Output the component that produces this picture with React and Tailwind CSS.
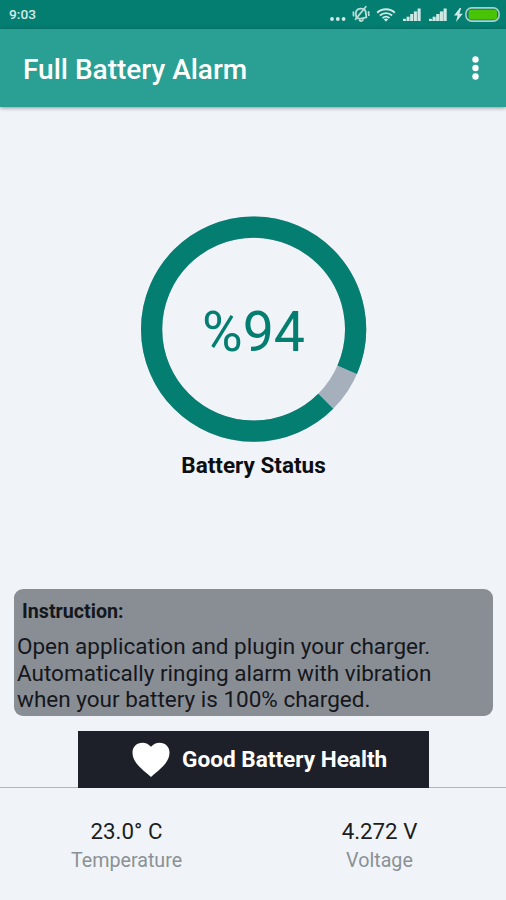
import React from 'react';

const LEVEL = 94;
const RADIUS = 102;

function SilentIcon() {
  return (
    <svg width="18" height="18" viewBox="0 0 18 18" fill="none" stroke="#b9dcd6" strokeWidth="1.8" strokeLinecap="round" strokeLinejoin="round">
      <path d="M4.4 12.6 3.8 8C4 5 6.6 3.2 9.6 3.6c2.6.2 4.2 2 4.2 4.6l.6 4.2-6.6 1.4Z" />
      <path d="M13.8 1.8 3.6 14.2" />
      <path d="M7.6 15.2c.8 1.4 2.8 1.2 3.4-.4M1.4 7.2l.2 3.4M16.6 7l.2 3.2" />
    </svg>
  );
}

function WifiIcon() {
  return (
    <svg width="20" height="14" viewBox="0 0 20 14" fill="none" stroke="#cfe9e5" strokeWidth="1.9">
      <path d="M1.2 4.7C6.1.1 13.9.1 18.8 4.7" />
      <path d="M3.9 7.5c3.5-3.2 8.7-3.2 12.2 0" />
      <path d="M6.5 10.1c2-1.8 5-1.8 7 0" />
      <path d="M7.8 11.2 10 13.7l2.2-2.5c-1.2-1-3.2-1-4.4 0Z" fill="#cfe9e5" stroke="none" />
    </svg>
  );
}

function SignalIcon({ dim }) {
  return (
    <svg width="18" height="13" viewBox="0 0 18 13" fill="#cfe9e5">
      <rect x="0" y="10.8" width="2.9" height="2.2" />
      <rect x="3.6" y="8.7" width="2.9" height="4.3" />
      <rect x="7.2" y="6" width="2.9" height="7" />
      <rect x="10.9" y="3.4" width="3" height="9.6" />
      <rect x="14.6" y="0.5" width="3" height="12.5" />
      <path d="M2 12.8 17.5 0.8v12.2H2Z" opacity={dim ? 0.5 : 0.2} />
    </svg>
  );
}

function StatusBar() {
  return (
    <div className="flex h-[29px] items-center bg-[#057e72] pl-[9px] pr-[6px]">
      <span className="text-[13.7px] leading-[29px] font-medium text-[#d3ebe8]">9:03</span>
      <div className="ml-auto flex items-center">
        <svg width="16" height="4" viewBox="0 0 16 4" fill="#cfe9e5" className="mt-[8px]">
          <circle cx="2" cy="2" r="1.9" />
          <circle cx="7.8" cy="2" r="1.9" />
          <circle cx="13.6" cy="2" r="1.9" />
        </svg>
        <div className="-mt-px ml-[6px]"><SilentIcon /></div>
        <div className="ml-[6px]"><WifiIcon /></div>
        <div className="ml-[7px]"><SignalIcon /></div>
        <div className="ml-[8px]"><SignalIcon dim /></div>
        <svg width="9" height="14" viewBox="0 0 9 14" fill="#cfe9e5" className="ml-[7px]">
          <path d="M5.8 0 0 7.6h3.6L2 14l6.8-8.2H5.4L7.2 0Z" />
        </svg>
        <svg width="35" height="15" viewBox="0 0 35 15" className="ml-[2px]">
          <rect x="0.9" y="0.9" width="33.2" height="13.2" rx="5.8" fill="none" stroke="#a9cfcb" strokeWidth="1.6" />
          <rect x="3.6" y="2.8" width="28.4" height="9.6" rx="2.2" fill="#49c305" />
        </svg>
      </div>
    </div>
  );
}

function BatteryRing() {
  return (
    <div className="grid h-[226px] w-[226px] place-items-center">
      <svg width="226" height="226" viewBox="0.4 -0.2 226 226" fill="none" strokeWidth="21.2" className="col-start-1 row-start-1">
        <circle cx="113" cy="113" r={RADIUS} stroke="#a6b0bc" />
        <circle cx="113" cy="113" r={RADIUS} stroke="#057e72" pathLength="100" strokeDasharray={`${LEVEL} 100`} transform="rotate(45 113 113)" />
      </svg>
      <span className="col-start-1 row-start-1 mt-[8px] text-[55.5px] leading-none text-[#057e72]">%{LEVEL}</span>
    </div>
  );
}

function Reading({ value, label }) {
  return (
    <div className="flex flex-1 flex-col items-center">
      <span className="text-[22.3px] leading-[30px] text-[#1b1d20]">{value}</span>
      <span className="mt-px text-[19.7px] leading-[28px] text-[#8b9194]">{label}</span>
    </div>
  );
}

export default function App() {
  return (
    <div className="flex h-[900px] w-[506px] flex-col overflow-hidden bg-[#f0f4f8] font-['Roboto',sans-serif]">
      <StatusBar />
      <header className="flex h-[78px] items-center justify-between bg-[#2a9f94] pr-[27px] pl-[23px] shadow-[0_1px_4px_rgba(0,0,0,0.4)]">
        <h1 className="mt-[3px] text-[28px] leading-none font-medium text-white">Full Battery Alarm</h1>
        <svg width="7" height="24" viewBox="0 0 7 24" fill="white">
          <circle cx="3.5" cy="3.5" r="3.2" />
          <circle cx="3.5" cy="12" r="3.2" />
          <circle cx="3.5" cy="20.5" r="3.2" />
        </svg>
      </header>

      <main className="flex h-[482px] flex-col items-center pt-[109px] pl-px">
        <BatteryRing />
        <p className="mt-[9px] text-[22.5px] leading-[28px] font-bold text-[#0c0e10]">Battery Status</p>
      </main>

      <section className="mx-[14px] h-[127px] w-[479px] rounded-[9px] bg-[#898d94] pt-[10px] pl-[3px] text-[#14171c]">
        <h2 className="pl-[5px] text-[19.7px] leading-[26px] font-bold">Instruction:</h2>
        <p className="mt-[8px] text-[22.5px] leading-[26.7px] whitespace-nowrap">
          Open application and plugin your charger.<br />
          Automatically ringing alarm with vibration<br />
          when your battery is 100% charged.
        </p>
      </section>

      <div className="mt-[15px] flex h-[57px] justify-center border-b border-[#b0b5ba] pl-px">
        <div className="flex h-[57px] w-[351px] shrink-0 items-center bg-[#1d2029] pl-[54px]">
          <svg width="38" height="35" viewBox="0 0 38 35" fill="white" className="-mt-px">
            <path d="M19 35 C8 25.5 0.5 20 0.5 10.5 C0.5 4.8 4.8 0.7 10.4 0.7 C13.8 0.7 17 2.3 19 4.8 C21 2.3 24.2 0.7 27.6 0.7 C33.2 0.7 37.5 4.8 37.5 10.5 C37.5 20 30 25.5 19 35 Z" />
          </svg>
          <span className="mt-[2px] ml-[12px] text-[22.6px] leading-none font-bold text-white">Good Battery Health</span>
        </div>
      </div>

      <footer className="flex pt-[28px]">
        <Reading value="23.0° C" label="Temperature" />
        <Reading value="4.272 V" label="Voltage" />
      </footer>
    </div>
  );
}
